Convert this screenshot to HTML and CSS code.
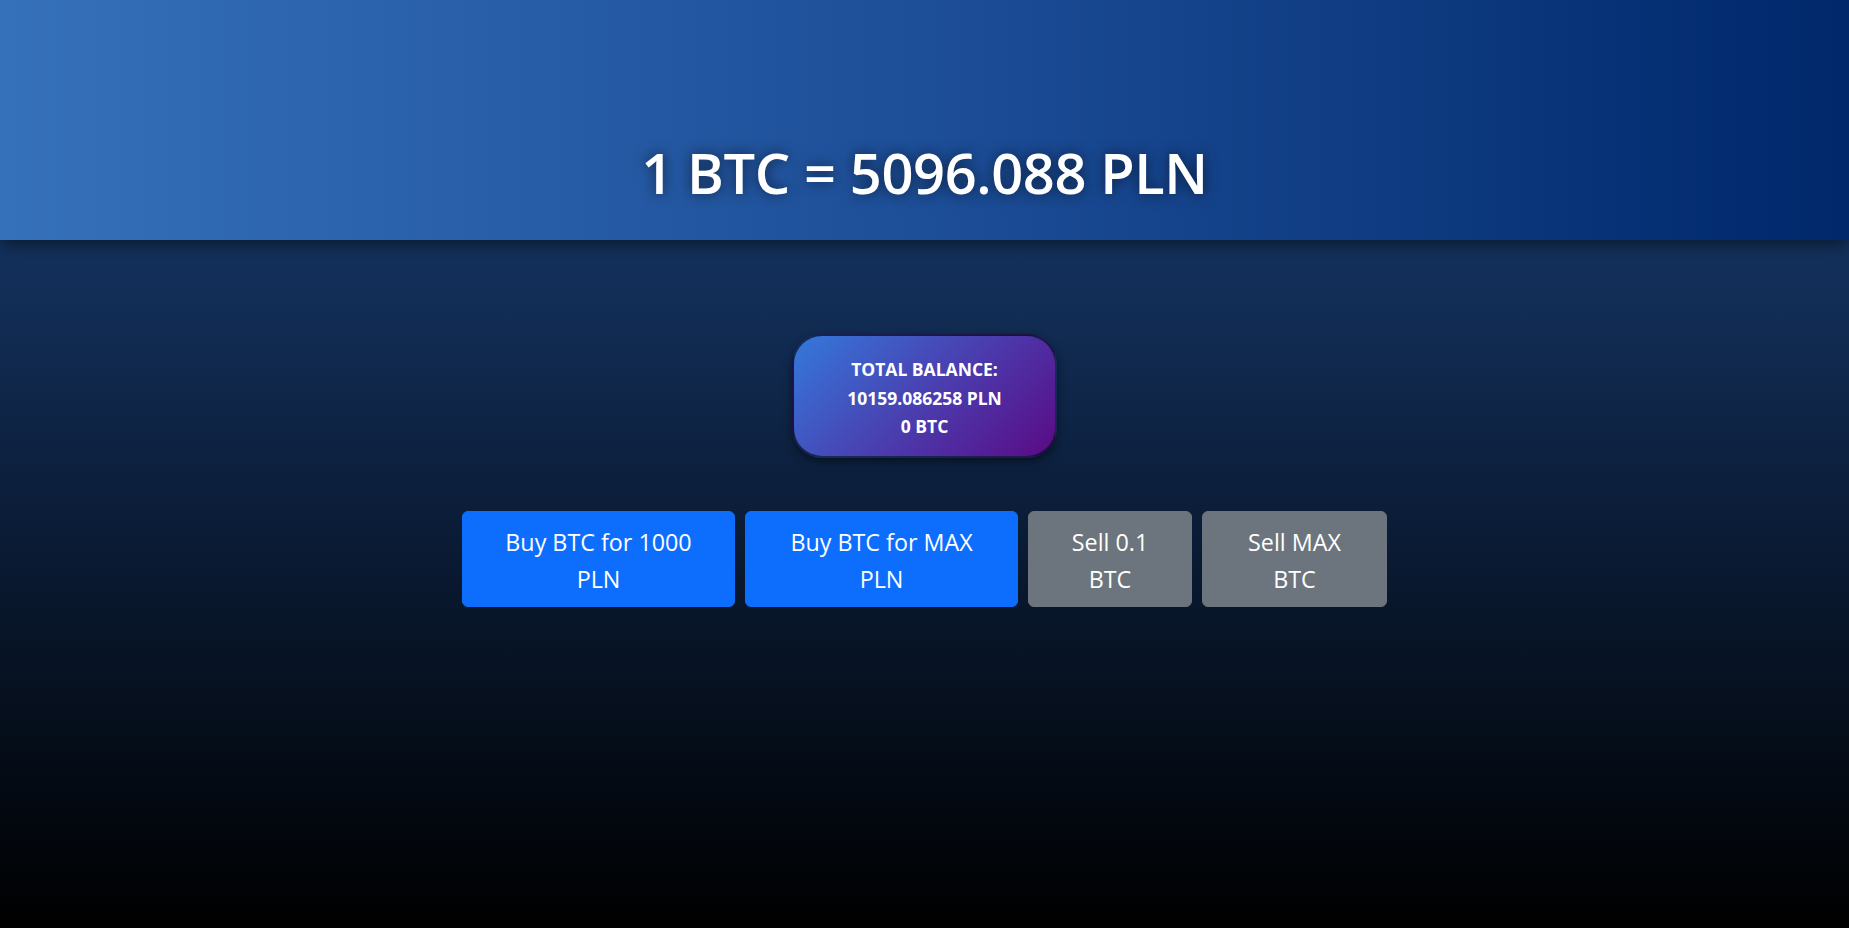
FILE: index.html
```html
<!DOCTYPE html>
<html lang="en">
<head>
<meta charset="utf-8">
<title>BTC Exchange</title>
<link rel="stylesheet" href="styles.css">
</head>
<body>
  <header class="top-bar">
    <h1 class="rate">1 BTC = 5096.088 PLN</h1>
  </header>
  <main class="content">
    <div class="balance-card">
      <div class="balance-line">TOTAL BALANCE:</div>
      <div class="balance-line">10159.086258 PLN</div>
      <div class="balance-line">0 BTC</div>
    </div>
    <div class="actions">
      <button class="btn btn-primary btn-buy1000">Buy BTC for 1000 PLN</button>
      <button class="btn btn-primary btn-buymax">Buy BTC for MAX PLN</button>
      <button class="btn btn-secondary btn-sell01">Sell 0.1 BTC</button>
      <button class="btn btn-secondary btn-sellmax">Sell MAX BTC</button>
    </div>
  </main>
</body>
</html>
```

FILE: styles.css
```css
* { box-sizing: border-box; }
html, body { height: 100%; }
body {
  margin: 0;
  font-family: "Open Sans", "Noto Sans", sans-serif;
  color: #fff;
  background: #000;
  display: flex;
  flex-direction: column;
}
.top-bar {
  height: 240px;
  flex: 0 0 240px;
  background: linear-gradient(to right, #3571ba 0%, #1d4e98 50%, #00286b 100%);
  display: flex;
  align-items: flex-end;
  justify-content: center;
  padding-bottom: 32px;
  box-shadow: 0 4px 18px rgba(0, 0, 0, 0.55);
  position: relative;
  z-index: 1;
}
.rate {
  margin: 0;
  font-size: 56px;
  font-weight: 600;
  line-height: 72px;
  text-shadow: 0 0 14px rgba(0, 0, 0, 0.6);
  letter-spacing: -0.4px;
}
.content {
  flex: 1;
  background: linear-gradient(to bottom, #14325e 0%, #0b1d38 40%, #000 100%);
  display: flex;
  flex-direction: column;
  align-items: center;
  padding-top: 94px;
}
.balance-card {
  width: 265px;
  height: 124px;
  padding-top: 4px;
  border-radius: 30px;
  background: linear-gradient(135deg, #3479db 0%, #4a3fb0 50%, #5a0a85 100%);
  border: 2px solid rgba(5, 15, 35, 0.7);
  box-shadow: 0 4px 10px rgba(0, 0, 0, 0.45);
  display: flex;
  flex-direction: column;
  justify-content: center;
  align-items: center;
  font-weight: 700;
  font-size: 17.5px;
  line-height: 28.5px;
}
.actions {
  margin-top: 53px;
  display: flex;
  gap: 10px;
}
.btn {
  font-family: inherit;
  font-size: 23.3px;
  line-height: 37px;
  color: #fff;
  border: 1px solid transparent;
  border-radius: 6px;
  height: 96px;
  padding: 12px 24px 8px;
  text-align: center;
  cursor: pointer;
}
.btn-primary { background: #0d6efd; border-color: #0d6efd; }
.btn-secondary { background: #6c757d; border-color: #6c757d; }
.btn-buy1000 { width: 273px; }
.btn-buymax { width: 273px; }
.btn-sell01 { width: 164px; }
.btn-sellmax { width: 185px; }
```
